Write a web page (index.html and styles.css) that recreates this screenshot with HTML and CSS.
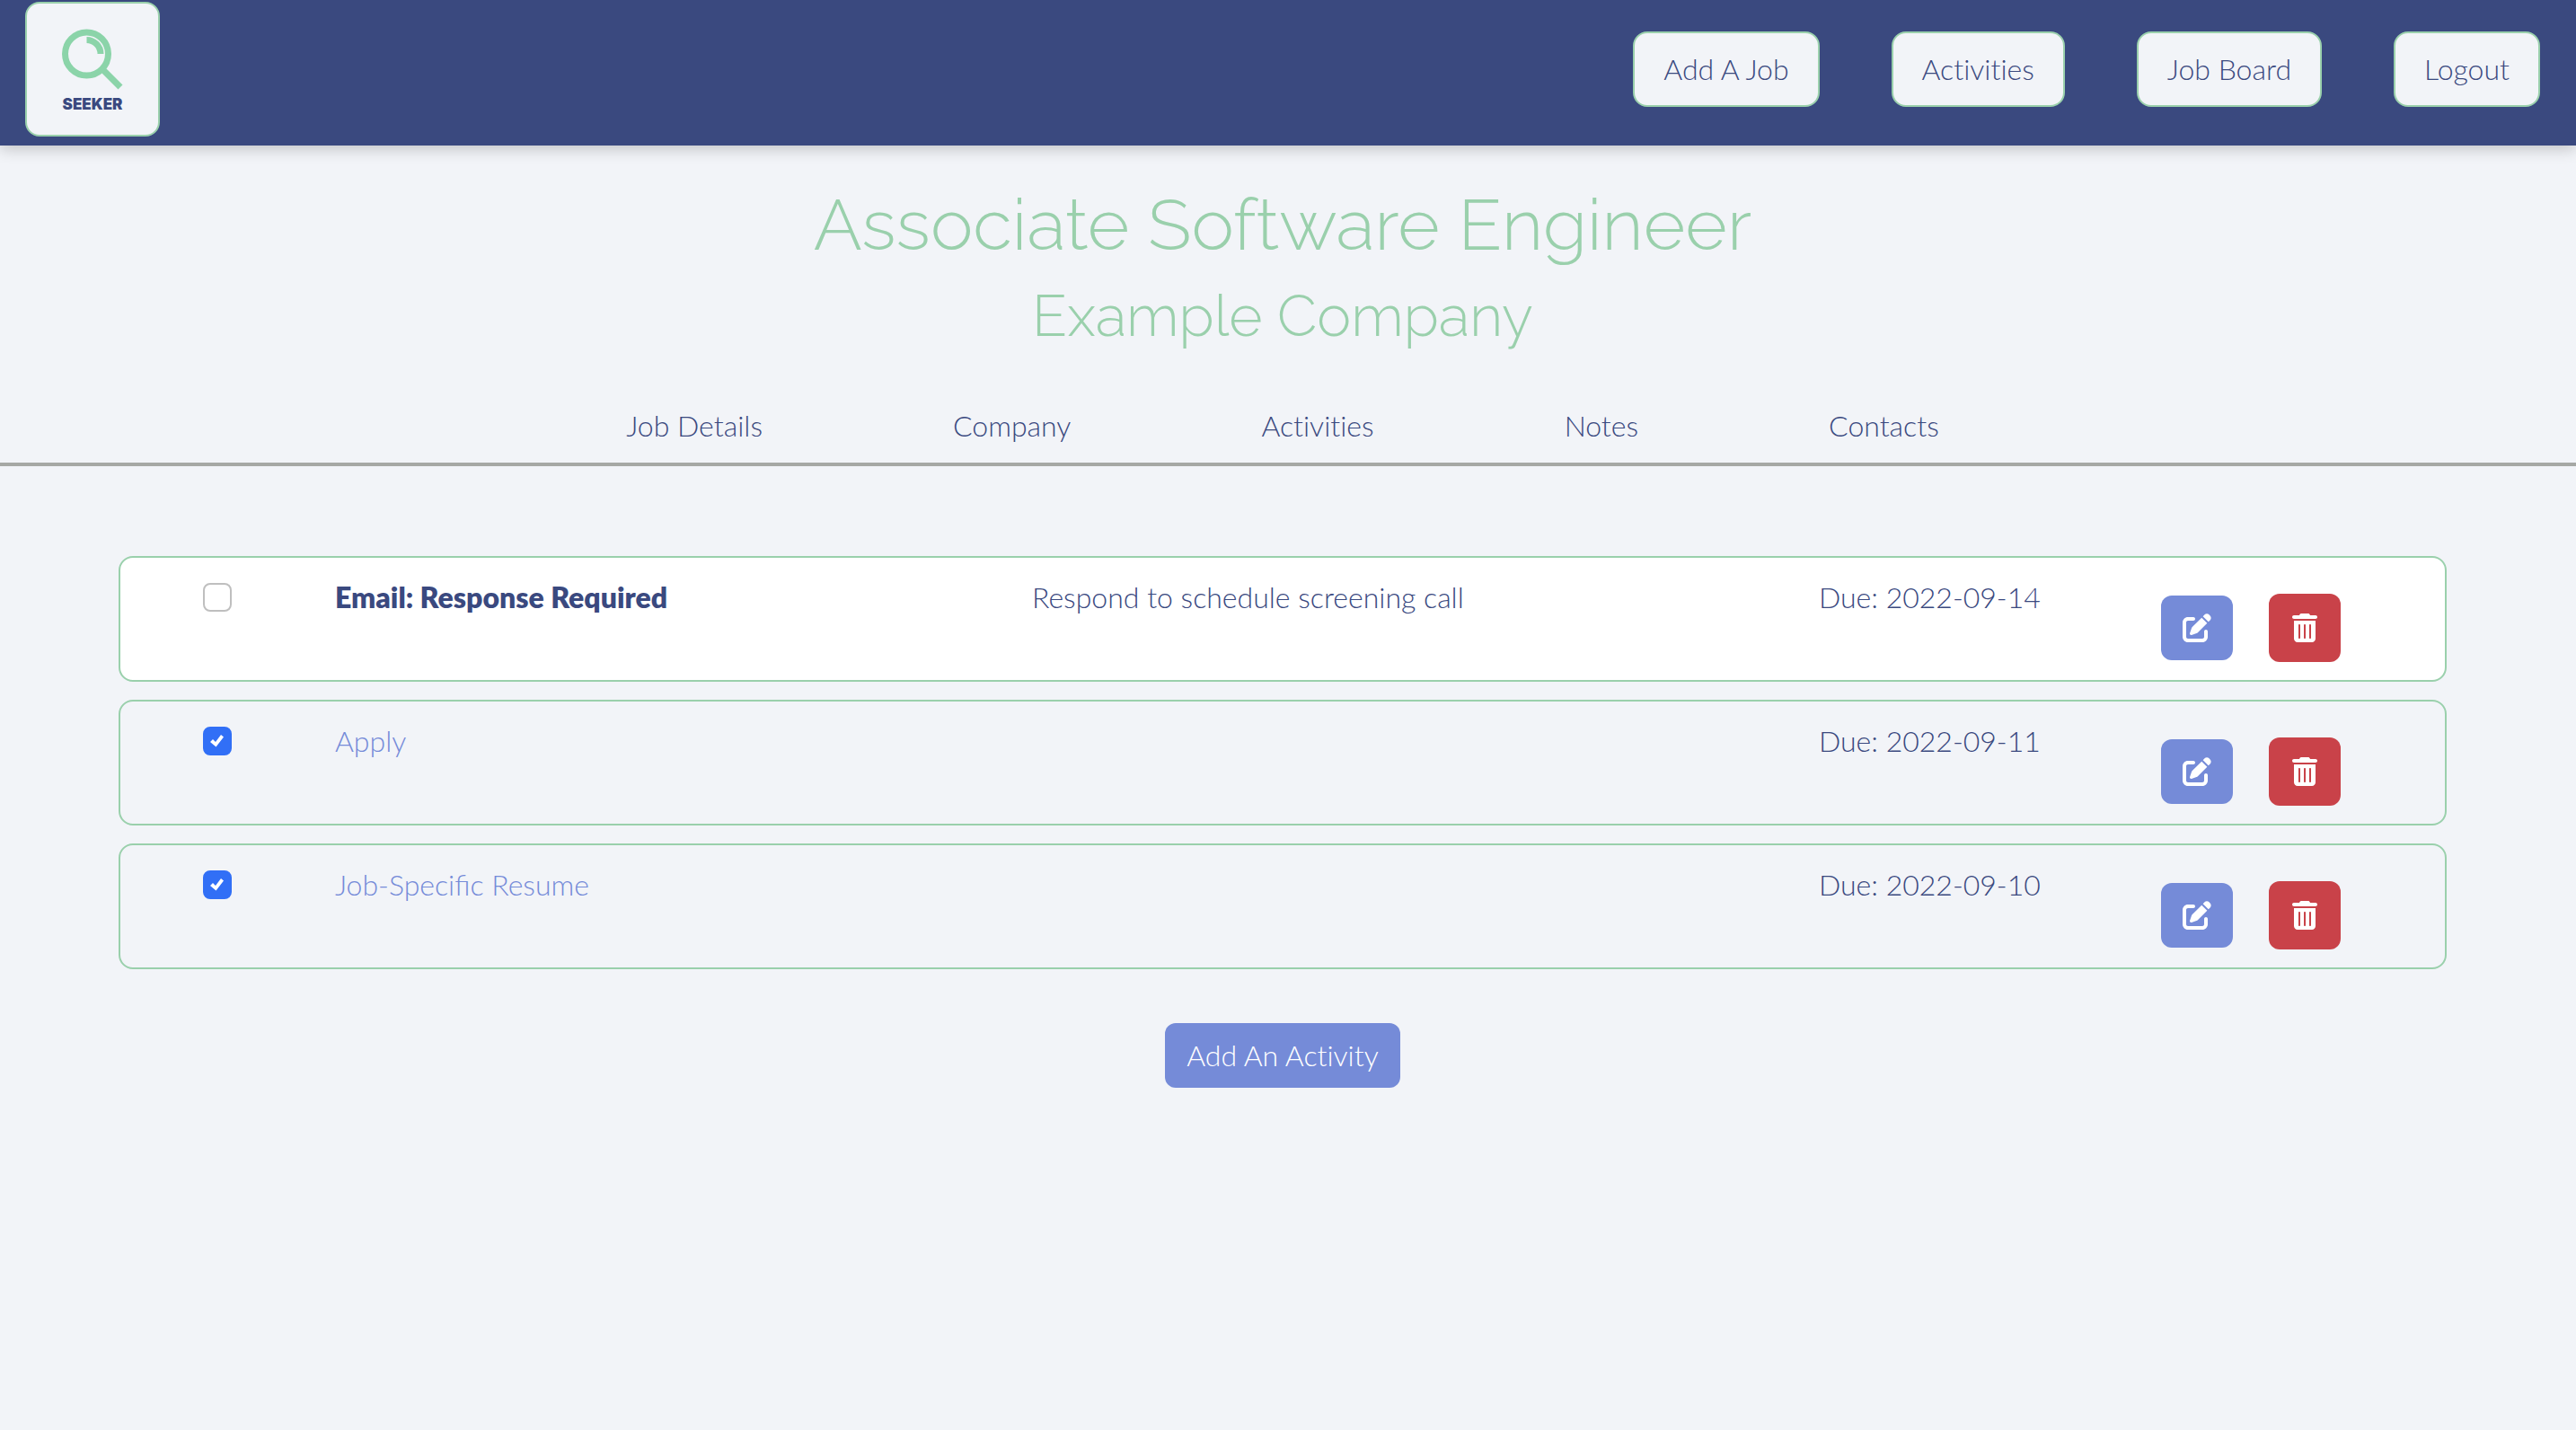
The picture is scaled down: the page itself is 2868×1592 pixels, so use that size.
FILE: index.html
```html
<!DOCTYPE html>
<html lang="en">
<head>
<meta charset="utf-8">
<meta name="viewport" content="width=device-width, initial-scale=1">
<title>Seeker</title>
<link rel="stylesheet" href="styles.css">
</head>
<body>
<svg class="sprite" aria-hidden="true">
  <symbol id="icon-edit" viewBox="0 0 512 512"><path d="M471.600 21.700c-21.900-21.900-57.300-21.900-79.200 0L362.300 51.700l97.900 97.900 30.100-30.100c21.900-21.900 21.900-57.300 0-79.200L471.600 21.700zm-299.200 220c-6.100 6.100-10.800 13.600-13.500 21.900l-29.600 88.800c-2.900 8.600-.6 18.100 5.800 24.600s15.900 8.700 24.600 5.800l88.800-29.600c8.200-2.700 15.700-7.400 21.900-13.500L437.700 172.300 339.700 74.300 172.400 241.700zM96 64C43 64 0 107 0 160V416c0 53 43 96 96 96H352c53 0 96-43 96-96V320c0-17.700-14.300-32-32-32s-32 14.300-32 32v96c0 17.700-14.300 32-32 32H96c-17.700 0-32-14.300-32-32V160c0-17.700 14.300-32 32-32h96c17.700 0 32-14.300 32-32s-14.300-32-32-32H96z"/></symbol>
  <symbol id="icon-trash" viewBox="0 0 448 512"><path d="M135.200 17.700C140.600 6.800 151.700 0 163.800 0H284.200c12.100 0 23.200 6.800 28.600 17.700L320 32h96c17.700 0 32 14.300 32 32s-14.300 32-32 32H32C14.300 96 0 81.700 0 64S14.300 32 32 32h96l7.200-14.300zM32 128H416V448c0 35.300-28.700 64-64 64H96c-35.300 0-64-28.700-64-64V128zm96 64c-8.800 0-16 7.200-16 16V432c0 8.800 7.200 16 16 16s16-7.200 16-16V208c0-8.800-7.200-16-16-16zm96 0c-8.800 0-16 7.200-16 16V432c0 8.800 7.200 16 16 16s16-7.200 16-16V208c0-8.800-7.200-16-16-16zm96 0c-8.800 0-16 7.200-16 16V432c0 8.800 7.200 16 16 16s16-7.200 16-16V208c0-8.800-7.200-16-16-16z"/></symbol>
</svg>
<header class="topbar">
  <a class="logo" href="#">
    <svg class="logo-mark" viewBox="0 0 68 68" aria-hidden="true" fill="none" stroke="#8bd4a9">
      <circle cx="27.500" cy="28" r="24" stroke-width="7"/>
      <path d="M27.500 12.500a15.500 15.500 0 0 1 15.500 15.500" stroke-width="7"/>
      <path d="M45 45l20 20" stroke-width="7"/>
    </svg>
    <span class="logo-name">SEEKER</span>
  </a>
  <nav class="main-nav" aria-label="Main">
    <a class="nav-button" href="#">Add A Job</a>
    <a class="nav-button" href="#">Activities</a>
    <a class="nav-button" href="#">Job Board</a>
    <a class="nav-button" href="#">Logout</a>
  </nav>
</header>
<main>
  <div class="heading">
    <h1>Associate Software Engineer</h1>
    <h2>Example Company</h2>
  </div>
  <nav class="tabs" aria-label="Job">
    <a href="#">Job Details</a>
    <a href="#">Company</a>
    <a href="#">Activities</a>
    <a href="#">Notes</a>
    <a href="#">Contacts</a>
  </nav>
  <section class="activities">
    <ul class="activity-list">
      <li class="activity open">
        <input class="check" type="checkbox" id="activity-1">
        <label class="name" for="activity-1">Email: Response Required</label>
        <span>Respond to schedule screening call</span>
        <span>Due: 2022-09-14</span>
        <div class="actions">
          <button class="button edit" type="button" aria-label="Edit"><svg><use href="#icon-edit"/></svg></button>
          <button class="button delete" type="button" aria-label="Delete"><svg><use href="#icon-trash"/></svg></button>
        </div>
      </li>
      <li class="activity">
        <input class="check" type="checkbox" id="activity-2" checked>
        <label class="name" for="activity-2">Apply</label>
        <span></span>
        <span>Due: 2022-09-11</span>
        <div class="actions">
          <button class="button edit" type="button" aria-label="Edit"><svg><use href="#icon-edit"/></svg></button>
          <button class="button delete" type="button" aria-label="Delete"><svg><use href="#icon-trash"/></svg></button>
        </div>
      </li>
      <li class="activity">
        <input class="check" type="checkbox" id="activity-3" checked>
        <label class="name" for="activity-3">Job-Specific Resume</label>
        <span></span>
        <span>Due: 2022-09-10</span>
        <div class="actions">
          <button class="button edit" type="button" aria-label="Edit"><svg><use href="#icon-edit"/></svg></button>
          <button class="button delete" type="button" aria-label="Delete"><svg><use href="#icon-trash"/></svg></button>
        </div>
      </li>
    </ul>
    <button class="button add" type="button">Add An Activity</button>
  </section>
</main>
</body>
</html>
```
FILE: styles.css
```css
:root {
  --navy: #3a497f;
  --green: #9ad0ac;
  --blue: #758bd8;
  --red: #c94249;
  --page: #f2f4f8;
}

* {
  box-sizing: border-box;
}

body {
  margin: 0;
  background: var(--page);
  color: var(--navy);
  font: 300 32px/48px Lato, sans-serif;
  font-variant-ligatures: no-common-ligatures;
}

a {
  color: inherit;
  text-decoration: none;
}

.sprite {
  display: none;
}

.topbar {
  display: flex;
  align-items: center;
  justify-content: space-between;
  padding: 2px 40px 10px 28px;
  background: var(--navy);
  box-shadow: 0 4px 16px rgba(0, 0, 0, 0.2);
}

.logo {
  display: flex;
  flex-direction: column;
  align-items: center;
  justify-content: center;
  gap: 6px;
  width: 150px;
  height: 150px;
  padding-top: 4px;
  border: 2px solid var(--green);
  border-radius: 16px;
  background: var(--page);
}

.logo-mark {
  width: 68px;
  height: 68px;
}

.logo-name {
  font: 900 17px/20px Inter, sans-serif;
}

.main-nav {
  display: flex;
  gap: 80px;
}

.nav-button {
  padding: 16px 32px;
  border: 2px solid var(--green);
  border-radius: 16px;
  background: var(--page);
}

main {
  text-align: center;
}

.heading {
  padding: 40px 12px 40px 0;
  color: var(--green);
  font-family: Raleway, Lato, sans-serif;
}

h1,
h2 {
  margin: 0;
  font-weight: 300;
}

h1 {
  font-size: 80px;
  line-height: 96px;
}

h2 {
  margin-top: 16px;
  font-size: 64px;
  line-height: 76px;
}

.tabs {
  display: flex;
  justify-content: center;
  gap: 212px;
  padding: 20px 12px 17px 0;
  border-bottom: 4px solid #a6a8a5;
}

.activities {
  padding: 100px 144px 100px 132px;
}

.activity-list {
  display: grid;
  gap: 20px;
  margin: 0 0 60px;
  padding: 0;
  list-style: none;
  text-align: left;
}

.activity {
  display: grid;
  grid-template-columns: 239fr 776fr 876fr 381fr 316fr;
  align-items: start;
  padding: 20px 0;
  border: 2px solid var(--green);
  border-radius: 16px;
}

.activity.open {
  background: #fff;
}

.name {
  color: var(--blue);
  font-variant-ligatures: normal;
}

.open .name {
  color: var(--navy);
  font-weight: 800;
}

.check {
  appearance: none;
  display: grid;
  place-items: center;
  width: 32px;
  height: 32px;
  margin: 8px 0 0 92px;
  border: 2px solid #bfbfbf;
  border-radius: 8px;
  background: #fff;
}

.check:checked {
  border-color: #316ff6;
  background: #316ff6;
}

.check:checked::before {
  content: "";
  width: 20px;
  height: 20px;
  background: #fff;
  clip-path: path("M2 11L5 8L8 11L14 3L17 5.500L8.500 16.500Z");
}

.actions {
  display: flex;
  align-items: center;
  gap: 40px;
  height: 96px;
  padding-top: 20px;
}

.button {
  display: inline-flex;
  align-items: center;
  justify-content: center;
  border: 0;
  border-radius: 12px;
  padding: 12px 24px;
  background: var(--blue);
  color: #fff;
  font: inherit;
  font-variant-ligatures: inherit;
}

.button svg {
  width: 32px;
  height: 32px;
  fill: currentColor;
}

.edit {
  height: 72px;
}

.delete {
  height: 76px;
  background: var(--red);
}
```
